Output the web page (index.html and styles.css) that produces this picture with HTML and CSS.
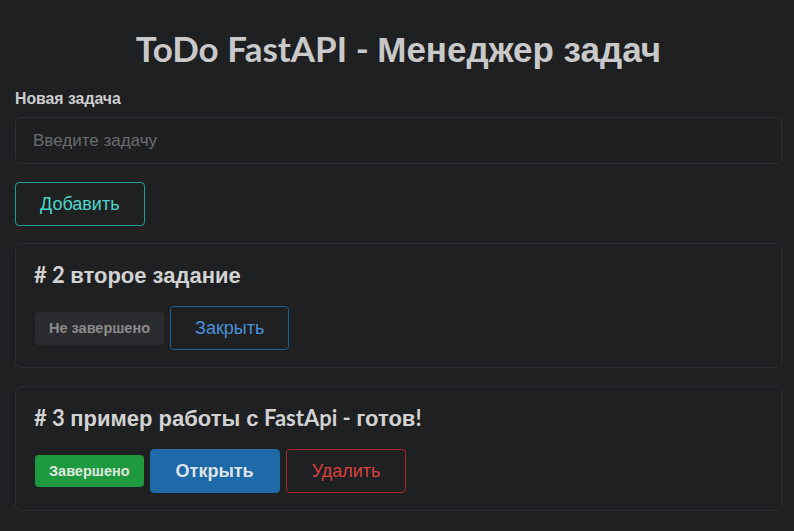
FILE: index.html
```html
<!DOCTYPE html>
<html lang="ru">
<head>
<meta charset="utf-8">
<title>ToDo FastAPI</title>
<link rel="stylesheet" href="styles.css">
</head>
<body>
<main class="page">
  <h1 class="title">ToDo FastAPI - <span class="cyr">Менеджер задач</span></h1>
  <form class="new-task">
    <label class="label" for="task">Новая задача</label>
    <input class="input" id="task" type="text" placeholder="Введите задачу">
    <button class="btn btn-teal" type="button">Добавить</button>
  </form>
  <section class="card">
    <h5 class="card-title"># 2 <span class="cyr">второе задание</span></h5>
    <div class="actions">
      <span class="badge badge-grey">Не завершено</span>
      <button class="btn btn-outline-blue" type="button">Закрыть</button>
    </div>
  </section>
  <section class="card">
    <h5 class="card-title"># 3 <span class="cyr">пример работы с</span> FastApi - <span class="cyr">готов</span>!</h5>
    <div class="actions">
      <span class="badge badge-green">Завершено</span>
      <button class="btn btn-blue" type="button">Открыть</button>
      <button class="btn btn-outline-red" type="button">Удалить</button>
    </div>
  </section>
</main>
</body>
</html>
```
FILE: styles.css
```css
* { box-sizing: border-box; }
html, body { margin: 0; padding: 0; }
body {
  background: #1f2022;
  color: #cfcfcf;
  font-family: "Liberation Sans", Arial, sans-serif;
}
.page {
  padding: 0 12px 0 15px;
  display: flex;
  flex-direction: column;
}
.title {
  margin: 28px 0 0;
  text-align: center;
  font-family: Lato, "Liberation Sans", sans-serif;
  font-weight: 700;
  font-size: 35px;
  line-height: 40px;
  color: #c9c9c9;
}
.cyr { font-family: "Liberation Sans", Arial, sans-serif; }
.new-task {
  display: flex;
  flex-direction: column;
  align-items: flex-start;
  margin-top: 19px;
}
.label {
  font-weight: 700;
  font-size: 15.8px;
  line-height: 20px;
  color: #cdcdcd;
}
.input {
  margin-top: 8px;
  width: 100%;
  height: 47px;
  background: #1e1f21;
  border: 1px solid #2e2f32;
  border-radius: 6px;
  padding: 0 17px;
  font-family: "Liberation Sans", Arial, sans-serif;
  font-size: 17px;
  color: #ddd;
}
.input::placeholder { color: #6b6c6e; }
.btn {
  height: 44px;
  padding: 0 24px;
  border-radius: 4px;
  background: transparent;
  font-family: "Liberation Sans", Arial, sans-serif;
  font-size: 18px;
  border: 1px solid transparent;
}
.btn-teal {
  margin-top: 18px;
  border-color: #1b9c95;
  color: #49d6c9;
}
.card {
  margin-top: 18px;
  border: 1px solid #2c2d30;
  border-radius: 6px;
  padding: 18px 18px 17px 18px;
}
.new-task + .card { margin-top: 17px; }
.card-title {
  margin: 0;
  font-family: Lato, "Liberation Sans", sans-serif;
  font-weight: 700;
  font-size: 22px;
  line-height: 26px;
  color: #d2d2d2;
}
.actions {
  margin-top: 17px;
  display: flex;
  align-items: center;
  gap: 6px;
  padding-left: 1px;
}
.badge {
  font-weight: 700;
  font-size: 14.5px;
  border-radius: 4px;
  padding: 0 14px;
  line-height: 33px;
}
.badge-grey { background: #2b2c2f; color: #8b8b8b; }
.badge-green { background: #1f9940; color: #dfe9df; line-height: 32px; }
.btn-outline-blue { border-color: #1f6391; color: #4a90d9; padding: 0 24px; }
.btn-blue { background: #1e69a7; color: #dfe4ea; font-weight: 700; border-color: #1e69a7; padding: 0 25px; }
.btn-outline-red { border-color: #a8282a; color: #d9403f; padding: 0 25px; }
```
